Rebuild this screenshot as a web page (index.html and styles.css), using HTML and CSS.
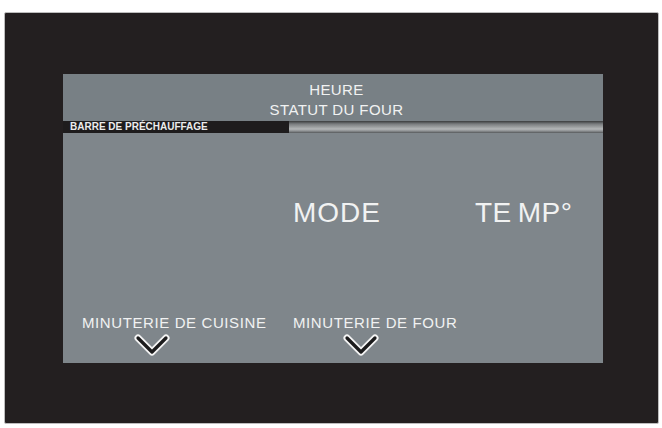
FILE: index.html
```html
<!DOCTYPE html>
<html lang="fr">
<head>
<meta charset="utf-8">
<title>Four</title>
<link rel="stylesheet" href="styles.css">
</head>
<body>
<div class="frame">
  <div class="screen">
    <div class="header">
      <div class="line">HEURE</div>
      <div class="line">STATUT DU FOUR</div>
    </div>
    <div class="bar">
      <div class="bar-label">BARRE DE PRÉCHAUFFAGE</div>
      <div class="bar-track"></div>
    </div>
    <div class="body">
      <div class="big mode">MODE</div>
      <div class="big temp">TE<span class="gap"></span>MP°</div>
      <div class="timer timer-kitchen">
        <div class="label">MINUTERIE DE CUISINE</div>
        <svg class="chev" width="36" height="25" viewBox="0 0 36 25"><path d="M4 5 L18 19 L32 5" fill="none" stroke="#f4f4f4" stroke-width="7" stroke-linecap="round" stroke-linejoin="round"/><path d="M4 5 L18 19 L32 5" fill="none" stroke="#1b1b1c" stroke-width="3.2" stroke-linecap="round" stroke-linejoin="round"/></svg>
      </div>
      <div class="timer timer-oven">
        <div class="label">MINUTERIE DE FOUR</div>
        <svg class="chev" width="36" height="25" viewBox="0 0 36 25"><path d="M4 5 L18 19 L32 5" fill="none" stroke="#f4f4f4" stroke-width="7" stroke-linecap="round" stroke-linejoin="round"/><path d="M4 5 L18 19 L32 5" fill="none" stroke="#1b1b1c" stroke-width="3.2" stroke-linecap="round" stroke-linejoin="round"/></svg>
      </div>
    </div>
  </div>
</div>
</body>
</html>
```

FILE: styles.css
```css
html, body {
  margin: 0;
  padding: 0;
  background: #ffffff;
}
body {
  width: 662px;
  height: 428px;
  overflow: hidden;
  font-family: "Liberation Sans", Arial, sans-serif;
  color: #f1f2f2;
}
.frame {
  box-sizing: border-box;
  margin: 12px 0 0 4px;
  width: 655px;
  height: 412px;
  background: #231f20;
  border: 1px solid #bdbdbd;
  border-radius: 2px;
  padding: 61px 0 0 58px;
}
.screen {
  width: 540px;
  height: 289px;
  display: flex;
  flex-direction: column;
  background: #7e858a;
}
.header {
  height: 47px;
  box-sizing: border-box;
  padding: 6px 0 0 7px;
  background: #788085;
  text-align: center;
  font-size: 15px;
  line-height: 20px;
  letter-spacing: 0.4px;
}
.bar {
  height: 12px;
  display: flex;
}
.bar-label {
  width: 226px;
  box-sizing: border-box;
  padding-left: 7px;
  background: #1e1c1d;
  font-weight: bold;
  font-size: 10px;
  line-height: 12px;
  color: #ececec;
  white-space: nowrap;
}
.bar-track {
  flex: 1;
  background: linear-gradient(to bottom, #3c3d3e 0px, #4e5152 1px, #7a7d7f 3px, #9c9fa0 6px, #b4b7b8 8px, #8d9092 10px, #55585a 12px);
}
.body {
  flex: 1;
  display: grid;
  grid-template-columns: 230px 182px 1fr;
  grid-template-rows: 28px auto;
  row-gap: 86px;
  padding-top: 66px;
  background: #7f868b;
}
.big {
  font-size: 28px;
  line-height: 28px;
  letter-spacing: 1px;
  white-space: nowrap;
}
.mode {
  grid-column: 2;
  grid-row: 1;
}
.temp {
  grid-column: 3;
  grid-row: 1;
  letter-spacing: 0.5px;
}
.gap {
  display: inline-block;
  width: 6px;
}
.timer {
  grid-row: 2;
  display: flex;
  flex-direction: column;
}
.label {
  font-size: 15px;
  line-height: 20px;
  letter-spacing: 0.6px;
  white-space: nowrap;
}
.timer-kitchen {
  grid-column: 1;
  padding-left: 19px;
}
.timer-oven {
  grid-column: 2 / span 2;
}
.chev {
  display: block;
  margin-top: 0;
}
.timer-kitchen .chev {
  margin-left: 52px;
}
.timer-oven .chev {
  margin-left: 50px;
}
```
